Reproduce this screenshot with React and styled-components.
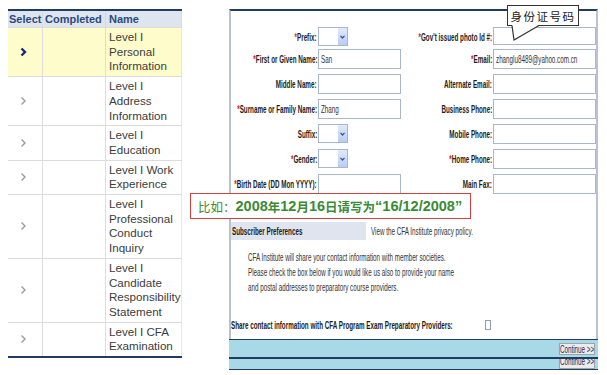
import React from 'react'
import styled, { createGlobalStyle } from 'styled-components'

const navy = '#1f3d63'
const sans = '"Liberation Sans", Arial, sans-serif'
const han = '"Liberation Sans", "Noto Sans CJK SC", sans-serif'

const Global = createGlobalStyle`
  html, body { margin: 0; padding: 0; background: #fff; }
  body { font-family: ${sans}; overflow: hidden; }
`

const Page = styled.div`
  position: relative;
  display: flex;
  align-items: flex-start;
  gap: 47px;
  width: 607px;
  height: 375px;
  padding: 9px 0 0 8px;
  box-sizing: border-box;
`

// condensed look of the form text
const Squeeze = styled.span`
  display: inline-block;
  white-space: nowrap;
  transform: scaleX(${p => p.$k || 0.57});
  transform-origin: ${p => p.$from || 'left'} center;
`

/* ---------- left step list ---------- */

const Steps = styled.div`
  width: 174px;
  border-top: 2px solid ${navy};
  border-bottom: 2px solid ${navy};
`

const StepRow = styled.div`
  display: grid;
  grid-template-columns: 35px 63px 76px;
  background: ${p => (p.$current ? '#fffccc' : '#fff')};
  border-bottom: ${p => (p.$last ? 'none' : '1px solid #dcdcdc')};
`

const HeadRow = styled(StepRow)`
  background: #dfe5ee;
  height: 17px;
  box-sizing: border-box;
`

const HeadCell = styled.div`
  font: bold 11px ${sans};
  color: #2b4a7c;
  line-height: 16px;
  padding-left: ${p => p.$pad || 1}px;
  border-right: 1px solid #d6dbe3;
  white-space: nowrap;
`

const Cell = styled.div`
  border-right: 1px solid #dedede;
`

const Mark = styled(Cell)`
  display: flex;
  align-items: center;
  justify-content: center;
  padding-right: 4px;
`

const NameCell = styled(Cell)`
  padding: 2px 0 2px 3px;
  font: 11.6px ${sans};
  line-height: 14.7px;
  color: #3c3c3c;
  white-space: nowrap;
  border-right-color: #e8e8e8;
`

const Chevron = ({ on }) => (
  <svg width="7" height="10" viewBox="0 0 7 10">
    <polyline
      points="1.5,1.5 5,5 1.5,8.5"
      fill="none"
      stroke={on ? '#1b2a78' : '#9a9a9a'}
      strokeWidth={on ? 2.4 : 1.4}
    />
  </svg>
)

const steps = [
  ['Level I', 'Personal', 'Information'],
  ['Level I', 'Address', 'Information'],
  ['Level I', 'Education'],
  ['Level I Work', 'Experience'],
  ['Level I', 'Professional', 'Conduct', 'Inquiry'],
  ['Level I', 'Candidate', 'Responsibility', 'Statement'],
  ['Level I CFA', 'Examination'],
]

/* ---------- right form panel ---------- */

const Panel = styled.div`
  width: 369px;
  display: flex;
  flex-direction: column;
`

const Sheet = styled.div`
  height: 330px;
  box-sizing: border-box;
  border-top: 2px solid ${navy};
  border-left: 2px solid #b9c3cf;
  border-right: 2px solid #b9c3cf;
  padding-top: 16px;
`

const Form = styled.div`
  display: grid;
  grid-template-columns: 87px 83px 92px 103px;
  grid-template-rows: 22px repeat(6, 25px);
  align-items: start;
`

const Label = styled.div`
  height: 20px;
  display: flex;
  align-items: center;
  justify-content: flex-end;
  padding-right: 1px;
  font: bold 11px ${sans};
  color: #1c1c1c;
  & > span { flex-shrink: 0; }
`

const Req = styled.span`
  color: #d4141c;
`

const Field = styled.div`
  box-sizing: border-box;
  width: 100%;
  height: ${p => p.$h || 20}px;
  border: 1px solid #a8b7ca;
  background: #fff;
  display: flex;
  align-items: center;
  padding-left: 2px;
  font: 11px ${sans};
  color: #333;
  overflow: hidden;
`

const Select = styled.div`
  box-sizing: border-box;
  width: 30px;
  height: 19px;
  border: 1px solid #a8b7ca;
  background: #fff;
  display: flex;
  justify-content: flex-end;
`

const DropBtn = styled.div`
  width: 9px;
  background: linear-gradient(#e1e9fb, #b8ccf3);
  display: flex;
  align-items: center;
  justify-content: center;
`

const Drop = () => (
  <Select>
    <DropBtn>
      <svg width="5" height="4" viewBox="0 0 5 4">
        <polyline points="0.5,0.8 2.5,3 4.5,0.8" fill="none" stroke="#3a4f8a" strokeWidth="1.2" />
      </svg>
    </DropBtn>
  </Select>
)

const Lbl = ({ req, children }) => (
  <Label>
    <Squeeze $from="right">
      {req && <Req>*</Req>}
      {children}
    </Squeeze>
  </Label>
)

const Txt = ({ children }) => <Squeeze>{children}</Squeeze>

const PrefBar = styled.div`
  margin-top: 23px;
  height: 18px;
  display: flex;
  align-items: stretch;
`

const PrefTitle = styled.div`
  width: 134px;
  background: #dfe4ee;
  display: flex;
  align-items: center;
  padding-left: 1px;
  font: bold 11px ${sans};
  color: #1c1c1c;
`

const PrefLink = styled.div`
  display: flex;
  align-items: center;
  padding-left: 5px;
  font: 11px ${sans};
  color: #333;
`

const Notice = styled.div`
  margin: 10px 0 0 17px;
  font: 11px ${sans};
  line-height: 15px;
  color: #333;
`

const ShareRow = styled.div`
  margin-top: 23px;
  height: 14px;
  display: grid;
  grid-template-columns: 254px auto;
  align-items: center;
  font: bold 11px ${sans};
  color: #1c1c1c;
`

const Check = styled.div`
  width: 6px;
  height: 10px;
  box-sizing: border-box;
  border: 1px solid #8d9db2;
  background: #fff;
`

const Bar = styled.div`
  height: 17px;
  background: #a9d8e7;
  border-top: 1px solid ${navy};
  display: flex;
  align-items: center;
  justify-content: flex-end;
  padding-right: 3px;
`

const LowBar = styled(Bar)`
  height: 10px;
  border-top: 2px solid ${navy};
  border-bottom: 1px solid ${navy};
  align-items: flex-end;
  overflow: hidden;
`

const Continue = styled.div`
  width: 36px;
  height: ${p => (p.$tall ? 17 : 12)}px;
  flex-shrink: 0;
  box-sizing: border-box;
  border: 1px solid #9aa3ad;
  background: #ebebeb;
  display: flex;
  align-items: center;
  justify-content: center;
  font: 11px ${sans};
  color: #1d2b55;
  overflow: hidden;
`

/* ---------- overlays ---------- */

const DateNote = styled.div`
  position: absolute;
  left: 190px;
  top: 193px;
  width: 281px;
  height: 26px;
  box-sizing: border-box;
  border: 1px solid #d2403f;
  background: #fff;
  display: flex;
  align-items: center;
  padding-left: 7px;
  font: bold 14.5px ${han};
  color: #3b8a35;
  white-space: nowrap;
`

const Han = styled.span`
  font-family: "Noto Sans CJK SC", sans-serif;
  font-size: 12.5px;
  font-weight: ${p => (p.$light ? 400 : 700)};
`

const Bubble = styled.div`
  position: absolute;
  left: 507px;
  top: 5px;
  width: 72px;
  height: 21px;
  box-sizing: border-box;
  border: 1px solid #333;
  background: #fff;
  display: flex;
  align-items: center;
  justify-content: center;
  font: 11.5px "Noto Sans CJK SC", sans-serif;
  letter-spacing: 1.5px;
  color: #222;
`

const Tail = styled.svg`
  position: absolute;
  left: 505px;
  top: 24px;
`

const rows = [
  [<Lbl req>Prefix:</Lbl>, <Drop />, <Lbl req>Gov't issued photo Id #:</Lbl>, <Field $h={18} />],
  [<Lbl req>First or Given Name:</Lbl>, <Field><Txt>San</Txt></Field>, <Lbl req>Email:</Lbl>, <Field><Txt>zhanglu8489@yahoo.com.cn</Txt></Field>],
  [<Lbl>Middle Name:</Lbl>, <Field />, <Lbl>Alternate Email:</Lbl>, <Field />],
  [<Lbl req>Surname or Family Name:</Lbl>, <Field><Txt>Zhang</Txt></Field>, <Lbl>Business Phone:</Lbl>, <Field />],
  [<Lbl>Suffix:</Lbl>, <Drop />, <Lbl>Mobile Phone:</Lbl>, <Field />],
  [<Lbl req>Gender:</Lbl>, <Drop />, <Lbl req>Home Phone:</Lbl>, <Field />],
  [<Lbl req>Birth Date (DD Mon YYYY):</Lbl>, <Field />, <Lbl>Main Fax:</Lbl>, <Field />],
]

export default function App () {
  return (
    <Page>
      <Global />
      <Steps>
        <HeadRow>
          <HeadCell>Select</HeadCell>
          <HeadCell $pad={2}>Completed</HeadCell>
          <HeadCell $pad={3}>Name</HeadCell>
        </HeadRow>
        {steps.map((lines, i) => (
          <StepRow key={i} $current={i === 0} $last={i === steps.length - 1}>
            <Mark><Chevron on={i === 0} /></Mark>
            <Cell />
            <NameCell>
              {lines.map((l, j) => <div key={j}>{l}</div>)}
            </NameCell>
          </StepRow>
        ))}
      </Steps>

      <Panel>
        <Sheet>
          <Form>
            {rows.flat().map((c, i) => <React.Fragment key={i}>{c}</React.Fragment>)}
          </Form>
          <PrefBar>
            <PrefTitle><Txt>Subscriber Preferences</Txt></PrefTitle>
            <PrefLink><Txt>View the CFA Institute privacy policy.</Txt></PrefLink>
          </PrefBar>
          <Notice>
            <Squeeze>
              CFA Institute will share your contact information with member societies.<br />
              Please check the box below if you would like us also to provide your name<br />
              and postal addresses to preparatory course providers.
            </Squeeze>
          </Notice>
          <ShareRow>
            <div><Txt>Share contact information with CFA Program Exam Preparatory Providers:</Txt></div>
            <Check />
          </ShareRow>
        </Sheet>
        <Bar>
          <Continue><Squeeze $from="center">Continue &gt;&gt;</Squeeze></Continue>
        </Bar>
        <LowBar>
          <Continue $tall><Squeeze $from="center">Continue &gt;&gt;</Squeeze></Continue>
        </LowBar>
      </Panel>

      <Bubble>身份证号码</Bubble>
      <Tail width="40" height="20" viewBox="0 0 40 20">
        <polygon points="7,1 9,16 34,1" fill="#fff" />
        <polyline points="7,1.5 9,16 34,1.5" fill="none" stroke="#333" strokeWidth="1.2" />
      </Tail>

      <DateNote>
        <Han $light>比如：</Han>2008<Han>年</Han>12<Han>月</Han>16<Han>日请写为</Han>“16/12/2008”
      </DateNote>
    </Page>
  )
}
